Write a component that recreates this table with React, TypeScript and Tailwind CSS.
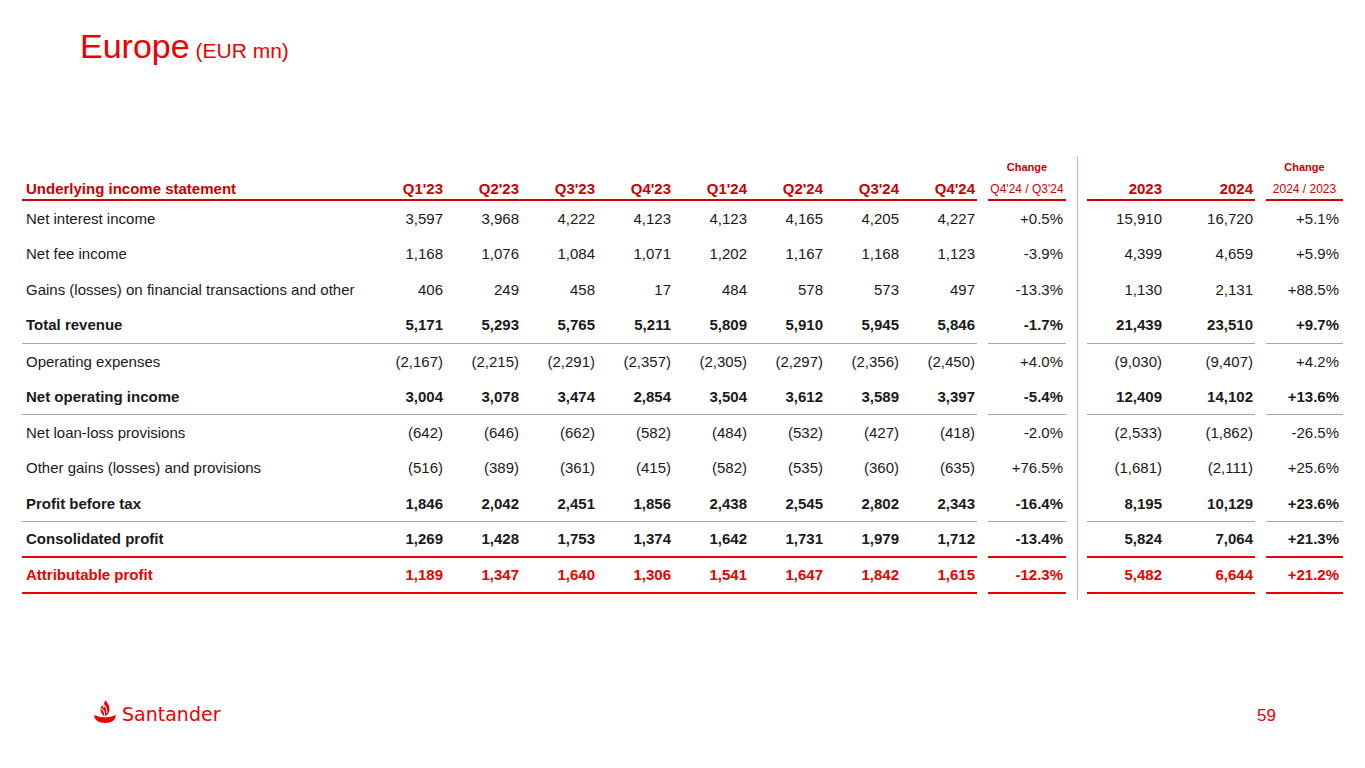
import React from "react";

type Row = {
  label: string;
  q: string[];
  ch: string;
  y: string[];
  ch2: string;
  text: string;
  h: string;
  border: string;
};

const NORMAL = "text-[#1a1a1a]";
const BOLD = "font-bold text-[#1a1a1a]";
const RED = "font-bold text-[#ec0000]";
const NONE = "";
const GRAY = "border-b border-[#a6a6a6]";
const REDLINE = "border-b-2 border-[#ec0000]";

const rows: Row[] = [
  { label: "Net interest income", q: ["3,597", "3,968", "4,222", "4,123", "4,123", "4,165", "4,205", "4,227"], ch: "+0.5%", y: ["15,910", "16,720"], ch2: "+5.1%", text: NORMAL, h: "h-[35px]", border: NONE },
  { label: "Net fee income", q: ["1,168", "1,076", "1,084", "1,071", "1,202", "1,167", "1,168", "1,123"], ch: "-3.9%", y: ["4,399", "4,659"], ch2: "+5.9%", text: NORMAL, h: "h-[36px]", border: NONE },
  { label: "Gains (losses) on financial transactions and other", q: ["406", "249", "458", "17", "484", "578", "573", "497"], ch: "-13.3%", y: ["1,130", "2,131"], ch2: "+88.5%", text: NORMAL, h: "h-[35px]", border: NONE },
  { label: "Total revenue", q: ["5,171", "5,293", "5,765", "5,211", "5,809", "5,910", "5,945", "5,846"], ch: "-1.7%", y: ["21,439", "23,510"], ch2: "+9.7%", text: BOLD, h: "h-[37px]", border: GRAY },
  { label: "Operating expenses", q: ["(2,167)", "(2,215)", "(2,291)", "(2,357)", "(2,305)", "(2,297)", "(2,356)", "(2,450)"], ch: "+4.0%", y: ["(9,030)", "(9,407)"], ch2: "+4.2%", text: NORMAL, h: "h-[35px]", border: NONE },
  { label: "Net operating income", q: ["3,004", "3,078", "3,474", "2,854", "3,504", "3,612", "3,589", "3,397"], ch: "-5.4%", y: ["12,409", "14,102"], ch2: "+13.6%", text: BOLD, h: "h-[36px]", border: GRAY },
  { label: "Net loan-loss provisions", q: ["(642)", "(646)", "(662)", "(582)", "(484)", "(532)", "(427)", "(418)"], ch: "-2.0%", y: ["(2,533)", "(1,862)"], ch2: "-26.5%", text: NORMAL, h: "h-[35px]", border: NONE },
  { label: "Other gains (losses) and provisions", q: ["(516)", "(389)", "(361)", "(415)", "(582)", "(535)", "(360)", "(635)"], ch: "+76.5%", y: ["(1,681)", "(2,111)"], ch2: "+25.6%", text: NORMAL, h: "h-[36px]", border: NONE },
  { label: "Profit before tax", q: ["1,846", "2,042", "2,451", "1,856", "2,438", "2,545", "2,802", "2,343"], ch: "-16.4%", y: ["8,195", "10,129"], ch2: "+23.6%", text: BOLD, h: "h-[36px]", border: GRAY },
  { label: "Consolidated profit", q: ["1,269", "1,428", "1,753", "1,374", "1,642", "1,731", "1,979", "1,712"], ch: "-13.4%", y: ["5,824", "7,064"], ch2: "+21.3%", text: BOLD, h: "h-[36px]", border: REDLINE },
  { label: "Attributable profit", q: ["1,189", "1,347", "1,640", "1,306", "1,541", "1,647", "1,842", "1,615"], ch: "-12.3%", y: ["5,482", "6,644"], ch2: "+21.2%", text: RED, h: "h-[36px]", border: REDLINE },
];

const quarters = ["Q1'23", "Q2'23", "Q3'23", "Q4'23", "Q1'24", "Q2'24", "Q3'24", "Q4'24"];

function Flame() {
  return (
    <svg width="22" height="23" viewBox="0 0 22 23" className="mb-[7px]">
      <path d="M0 15 Q11 19.8 22 15 Q21 23 11 23 Q1 23 0 15 Z" fill="#ec0000" />
      <path
        d="M11.5 0 C12.5 2.5 15.5 4.5 15.5 9 C15.5 12.5 13.5 15.5 11 16 C8.5 15.5 6.5 12.5 6.5 9.5 C6.5 7.5 7.5 6 8.5 5 C8.5 6.5 9 7.5 9.8 8.2 C9.5 5.5 10 2.5 11.5 0 Z"
        fill="#ec0000"
      />
      <path d="M9.4 4.2 C11.2 6.3 13.6 8.4 12.6 13" stroke="#ffffff" strokeWidth="1.1" fill="none" />
      <path d="M7.3 8.4 C9 10 11.1 11.4 10.6 15.6" stroke="#ffffff" strokeWidth="1.1" fill="none" />
    </svg>
  );
}

function LeftBlock() {
  return (
    <div className="flex flex-col">
      <div className="flex">
        <div className="flex items-end w-[955px] h-[46px] border-b-2 border-[#cc0000] pb-[1px] text-[15px] leading-[18px] font-bold text-[#cc0000]">
          <div className="w-[347px] pl-[4px]">Underlying income statement</div>
          {quarters.map((q) => (
            <div key={q} className="w-[76px] pr-[2px] text-right">
              {q}
            </div>
          ))}
        </div>
        <div className="ml-[11px] w-[78px] h-[46px] border-b-2 border-[#cc0000] flex flex-col items-center justify-end pb-[3px] text-[#cc0000]">
          <div className="text-[11px] leading-[14px] font-bold mb-[8px]">Change</div>
          <div className="text-[12px] leading-[14px] whitespace-nowrap">Q4'24 / Q3'24</div>
        </div>
      </div>
      {rows.map((r) => (
        <div key={r.label} className="flex text-[15px] leading-[18px]">
          <div className={`flex items-center w-[955px] ${r.h} ${r.border} ${r.text}`}>
            <div className="w-[347px] pl-[4px] whitespace-nowrap">{r.label}</div>
            {r.q.map((v, i) => (
              <div key={i} className="w-[76px] pr-[2px] text-right">
                {v}
              </div>
            ))}
          </div>
          <div className={`ml-[11px] w-[78px] flex items-center justify-end pr-[3px] ${r.h} ${r.border} ${r.text}`}>
            {r.ch}
          </div>
        </div>
      ))}
    </div>
  );
}

function RightBlock() {
  return (
    <div className="ml-[9px] flex flex-col">
      <div className="flex">
        <div className="flex items-end w-[168px] h-[46px] border-b-2 border-[#cc0000] pb-[1px] text-[15px] leading-[18px] font-bold text-[#cc0000]">
          <div className="w-[77px] pr-[2px] text-right">2023</div>
          <div className="w-[91px] pr-[2px] text-right">2024</div>
        </div>
        <div className="ml-[11px] w-[77px] h-[46px] border-b-2 border-[#cc0000] flex flex-col items-center justify-end pb-[3px] text-[#cc0000]">
          <div className="text-[11px] leading-[14px] font-bold mb-[8px]">Change</div>
          <div className="text-[12px] leading-[14px] whitespace-nowrap">2024 / 2023</div>
        </div>
      </div>
      {rows.map((r) => (
        <div key={r.label} className="flex text-[15px] leading-[18px]">
          <div className={`flex items-center w-[168px] ${r.h} ${r.border} ${r.text}`}>
            <div className="w-[77px] pr-[2px] text-right">{r.y[0]}</div>
            <div className="w-[91px] pr-[2px] text-right">{r.y[1]}</div>
          </div>
          <div className={`ml-[11px] w-[77px] flex items-center justify-end pr-[4px] ${r.h} ${r.border} ${r.text}`}>
            {r.ch2}
          </div>
        </div>
      ))}
    </div>
  );
}

export default function App() {
  return (
    <div className="w-[1365px] h-[768px] flex flex-col bg-white overflow-hidden font-['Liberation_Sans',Arial,sans-serif]">
      <div className="pt-[29px] pl-[80px]">
        <h1 className="text-[34px] leading-[34px] text-[#ec0000] font-normal">
          Europe<span className="text-[21px] leading-none"> (EUR mn)</span>
        </h1>
      </div>
      <div className="mt-[92px] pl-[22px] flex items-start">
        <LeftBlock />
        <div className="ml-[11px] mt-[1px] w-px h-[444px] bg-[#eaa3a3]" />
        <RightBlock />
      </div>
      <div className="mt-auto mb-[38px] h-[30px] flex items-center justify-between pl-[94px] pr-[89px]">
        <div className="flex items-center">
          <Flame />
          <span className="ml-[6px] mb-[3px] text-[19px] leading-[22px] text-[#ec0000] font-['DejaVu_Sans',sans-serif]">
            Santander
          </span>
        </div>
        <div className="mt-[2px] text-[17px] leading-[20px] text-[#ec0000]">59</div>
      </div>
    </div>
  );
}
